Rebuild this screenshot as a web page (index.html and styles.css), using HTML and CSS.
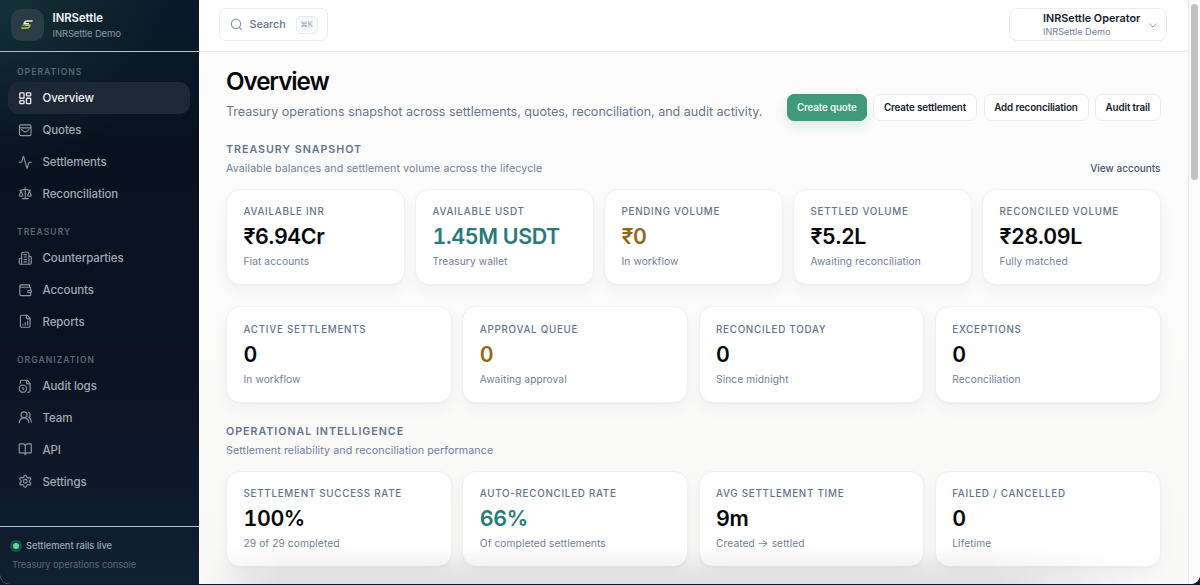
FILE: index.html
```html
<!DOCTYPE html>
<html lang="en">
<head>
<meta charset="utf-8">
<title>Overview – INRSettle</title>
<link rel="stylesheet" href="styles.css">
</head>
<body>
<div class="window">
  <aside class="sidebar">
    <div class="brand">
      <div class="brand-mark">
        <svg width="14" height="12" viewBox="0 0 14 12" fill="none" stroke-width="1.6"><path d="M12.6 2H7.2Q5.2 2 4.6 3.4L4.2 4.7H9" stroke="#e9ecea"/><path d="M5 6.2H9.8L9.3 7.7Q8.8 9 7.2 9H1.2" stroke="#b9c94e"/><path d="M1.8 6.4H5.5" stroke="#8fa34a" stroke-width="1"/></svg>
      </div>
      <div class="brand-text"><div class="brand-name">INRSettle</div><div class="brand-org">INRSettle Demo</div></div>
    </div>
    <nav class="nav">
      <div class="nav-title">OPERATIONS</div>
      <a class="nav-item active"><svg class="icon" viewBox="0 0 24 24"><rect x="3" y="3" width="7" height="9" rx="1"/><rect x="14" y="3" width="7" height="5" rx="1"/><rect x="14" y="12" width="7" height="9" rx="1"/><rect x="3" y="16" width="7" height="5" rx="1"/></svg><span>Overview</span></a>
      <a class="nav-item"><svg class="icon" viewBox="0 0 24 24"><rect x="2.5" y="3" width="19" height="18" rx="2.5"/><path d="M3 8h18M6 11l4.4 3.3a3 3 0 0 0 3.2 0L18 11"/></svg><span>Quotes</span></a>
      <a class="nav-item"><svg class="icon" viewBox="0 0 24 24"><path d="M22 12h-2.48a2 2 0 0 0-1.93 1.46l-2.35 8.36a.25.25 0 0 1-.48 0L9.24 2.18a.25.25 0 0 0-.48 0l-2.35 8.36A2 2 0 0 1 4.49 12H2"/></svg><span>Settlements</span></a>
      <a class="nav-item"><svg class="icon" viewBox="0 0 24 24"><path d="m16 16 3-8 3 8c-.87.65-1.92 1-3 1s-2.13-.35-3-1ZM2 16l3-8 3 8c-.87.65-1.92 1-3 1s-2.13-.35-3-1ZM7 21h10M12 3v18M3 7h2c2 0 5-1 7-2 2 1 5 2 7 2h2"/></svg><span>Reconciliation</span></a>
      <div class="nav-title">TREASURY</div>
      <a class="nav-item"><svg class="icon" viewBox="0 0 24 24"><path d="M6 22V4a2 2 0 0 1 2-2h8a2 2 0 0 1 2 2v18ZM6 12H4a2 2 0 0 0-2 2v6a2 2 0 0 0 2 2h2M18 9h2a2 2 0 0 1 2 2v9a2 2 0 0 1-2 2h-2M10 6h4M10 10h4M10 14h4M10 18h4"/></svg><span>Counterparties</span></a>
      <a class="nav-item"><svg class="icon" viewBox="0 0 24 24"><path d="M19 7V4a1 1 0 0 0-1-1H5a2 2 0 0 0 0 4h15a1 1 0 0 1 1 1v4h-3a2 2 0 0 0 0 4h3a1 1 0 0 0 1-1v-2a1 1 0 0 0-1-1M3 5v14a2 2 0 0 0 2 2h15a1 1 0 0 0 1-1v-4"/></svg><span>Accounts</span></a>
      <a class="nav-item"><svg class="icon" viewBox="0 0 24 24"><path d="M15 2H6a2 2 0 0 0-2 2v16a2 2 0 0 0 2 2h12a2 2 0 0 0 2-2V7ZM14 2v4a2 2 0 0 0 2 2h4M8 18v-1M12 18v-4M16 18v-6"/></svg><span>Reports</span></a>
      <div class="nav-title">ORGANIZATION</div>
      <a class="nav-item"><svg class="icon" viewBox="0 0 24 24"><path d="M16 22h2a2 2 0 0 0 2-2V7l-5-5H6a2 2 0 0 0-2 2v3M14 2v4a2 2 0 0 0 2 2h4"/><circle cx="8" cy="16" r="6"/><path d="M9.5 17.5 8 16.25V14"/></svg><span>Audit logs</span></a>
      <a class="nav-item"><svg class="icon" viewBox="0 0 24 24"><path d="M18 21a8 8 0 0 0-16 0"/><circle cx="10" cy="8" r="5"/><path d="M22 20c0-3.37-2-6.5-4-8a5 5 0 0 0-.45-8.3"/></svg><span>Team</span></a>
      <a class="nav-item"><svg class="icon" viewBox="0 0 24 24"><path d="M12 7v14M3 18a1 1 0 0 1-1-1V4a1 1 0 0 1 1-1h5a4 4 0 0 1 4 4 4 4 0 0 1 4-4h5a1 1 0 0 1 1 1v13a1 1 0 0 1-1 1h-6a3 3 0 0 0-3 3 3 3 0 0 0-3-3z"/></svg><span>API</span></a>
      <a class="nav-item"><svg class="icon" viewBox="0 0 24 24"><path d="M12.22 2h-.44a2 2 0 0 0-2 2v.18a2 2 0 0 1-1 1.73l-.43.25a2 2 0 0 1-2 0l-.15-.08a2 2 0 0 0-2.73.73l-.22.38a2 2 0 0 0 .73 2.73l.15.1a2 2 0 0 1 1 1.72v.51a2 2 0 0 1-1 1.74l-.15.09a2 2 0 0 0-.73 2.73l.22.38a2 2 0 0 0 2.73.73l.15-.08a2 2 0 0 1 2 0l.43.25a2 2 0 0 1 1 1.73V20a2 2 0 0 0 2 2h.44a2 2 0 0 0 2-2v-.18a2 2 0 0 1 1-1.73l.43-.25a2 2 0 0 1 2 0l.15.08a2 2 0 0 0 2.73-.73l.22-.39a2 2 0 0 0-.73-2.73l-.15-.08a2 2 0 0 1-1-1.74v-.5a2 2 0 0 1 1-1.74l.15-.09a2 2 0 0 0 .73-2.73l-.22-.38a2 2 0 0 0-2.73-.73l-.15.08a2 2 0 0 1-2 0l-.43-.25a2 2 0 0 1-1-1.73V4a2 2 0 0 0-2-2z"/><circle cx="12" cy="12" r="3"/></svg><span>Settings</span></a>
    </nav>
    <div class="status">
      <div class="status-line"><i class="dot"></i><span>Settlement rails live</span></div>
      <div class="status-sub">Treasury operations console</div>
    </div>
  </aside>

  <div class="main">
    <header class="topbar">
      <div class="search"><svg class="icon search-icon" viewBox="0 0 24 24"><circle cx="11" cy="11" r="8.5"/><path d="m21.5 21.5-4.3-4.3"/></svg><span class="search-label">Search</span><kbd class="kbd">⌘K</kbd></div>
      <div class="account"><div><div class="account-name">INRSettle Operator</div><div class="account-org">INRSettle Demo</div></div><svg class="icon chevron" viewBox="0 0 24 24"><path d="m4 9 8 8 8-8"/></svg></div>
    </header>
    <main class="content">
      <div class="page-head">
        <div><h1 class="title">Overview</h1><p class="subtitle">Treasury operations snapshot across settlements, quotes, reconciliation, and audit activity.</p></div>
        <div class="actions"><button class="btn primary">Create quote</button><button class="btn b-settle">Create settlement</button><button class="btn b-recon">Add reconciliation</button><button class="btn b-audit">Audit trail</button></div>
      </div>
      <section class="section">
        <div class="section-head"><div><h2 class="section-title">TREASURY SNAPSHOT</h2><p class="section-sub">Available balances and settlement volume across the lifecycle</p></div><a class="link">View accounts</a></div>
        <div class="cards five">
          <div class="card"><div class="label">AVAILABLE INR</div><div class="value">₹6.94Cr</div><div class="note">Fiat accounts</div></div>
          <div class="card"><div class="label">AVAILABLE USDT</div><div class="value teal">1.45M USDT</div><div class="note">Treasury wallet</div></div>
          <div class="card"><div class="label">PENDING VOLUME</div><div class="value amber">₹0</div><div class="note">In workflow</div></div>
          <div class="card"><div class="label">SETTLED VOLUME</div><div class="value">₹5.2L</div><div class="note">Awaiting reconciliation</div></div>
          <div class="card"><div class="label">RECONCILED VOLUME</div><div class="value">₹28.09L</div><div class="note">Fully matched</div></div>
        </div>
      </section>
      <div class="cards four">
        <div class="card"><div class="label">ACTIVE SETTLEMENTS</div><div class="value">0</div><div class="note">In workflow</div></div>
        <div class="card"><div class="label">APPROVAL QUEUE</div><div class="value amber">0</div><div class="note">Awaiting approval</div></div>
        <div class="card"><div class="label">RECONCILED TODAY</div><div class="value">0</div><div class="note">Since midnight</div></div>
        <div class="card"><div class="label">EXCEPTIONS</div><div class="value">0</div><div class="note">Reconciliation</div></div>
      </div>
      <section class="section intelligence">
        <div class="section-head"><div><h2 class="section-title">OPERATIONAL INTELLIGENCE</h2><p class="section-sub">Settlement reliability and reconciliation performance</p></div></div>
        <div class="cards four">
          <div class="card"><div class="label">SETTLEMENT SUCCESS RATE</div><div class="value">100%</div><div class="note">29 of 29 completed</div></div>
          <div class="card"><div class="label">AUTO-RECONCILED RATE</div><div class="value teal">66%</div><div class="note">Of completed settlements</div></div>
          <div class="card"><div class="label">AVG SETTLEMENT TIME</div><div class="value">9m</div><div class="note">Created <span class="arrow">→</span> settled</div></div>
          <div class="card"><div class="label">FAILED / CANCELLED</div><div class="value">0</div><div class="note">Lifetime</div></div>
        </div>
      </section>
    </main>
    <div class="fade"></div>
  </div>
  <div class="scroll-track"><div class="scroll-thumb"></div></div>
</div>
</body>
</html>
```
FILE: styles.css
```css
* { box-sizing: border-box; }
body { margin: 0; background: #11142b; font-family: Inter, "Liberation Sans", sans-serif; overflow: hidden; }
h1, h2, p { margin: 0; }
.window { display: flex; width: 1200px; height: 584px; border-radius: 0 0 9px 9px; overflow: hidden; background: #fcfcfc; }
.icon { fill: none; stroke: currentColor; stroke-width: 1.9; stroke-linecap: round; stroke-linejoin: round; flex: none; }

.sidebar { width: 199px; flex: none; display: flex; flex-direction: column; background: radial-gradient(circle at 0 0, rgba(30, 82, 72, .42), transparent 170px), linear-gradient(180deg, #0b1a29 0, #08121f 140px, #0a1221 350px, #0d1828 470px, #102133 584px); }
.brand { height: 52px; flex: none; display: flex; align-items: flex-start; gap: 9px; padding: 8.5px 11px 0; border-bottom: 1.5px solid #b4c0c4; }
.brand-mark { width: 32.5px; height: 32.5px; border-radius: 10px; background: #2a3d45; display: flex; align-items: center; justify-content: center; }
.brand-text { padding-top: 2px; }
.brand-name { font-size: 11.3px; line-height: 15px; font-weight: 600; color: #f3f6f8; }
.brand-org { font-size: 9.6px; line-height: 15px; letter-spacing: -.2px; color: #8996a1; }
.nav { flex: 1; padding: 13px 8px 0; }
.nav-title { height: 14px; padding-left: 9px; margin-bottom: 3px; font-size: 8.5px; line-height: 14px; letter-spacing: 1.08px; font-weight: 600; color: #5d6873; }
.nav-item + .nav-title { margin-top: 15.2px; }
.nav-item { height: 31.93px; display: flex; align-items: center; gap: 10.5px; padding-left: 9.5px; margin-right: 1px; border-radius: 10px; font-size: 11.5px; font-weight: 500; letter-spacing: -.1px; color: #a1aab4; }
.nav-item .icon { width: 14.5px; height: 14.5px; color: #8b96a2; }
.nav-item.active { background: #1c2835; color: #eef1f4; }
.nav-item.active .icon { color: #e6eaee; stroke-width: 2.2; }
.status { height: 58px; flex: none; border-top: 1.5px solid #b4c0c4; padding: 11px 12px; }
.status-line { display: flex; align-items: center; gap: 7px; padding-left: 1px; font-size: 9.3px; line-height: 16px; font-weight: 500; letter-spacing: -.03px; color: #9ca7b1; }
.dot { width: 6px; height: 6px; border-radius: 50%; background: #70c9a8; box-shadow: 0 0 0 3px #14573f; }
.status-sub { margin-top: 3px; font-size: 9.3px; line-height: 16px; letter-spacing: -.04px; color: #5c6976; }

.main { position: relative; flex: 1; min-width: 0; display: flex; flex-direction: column; background: linear-gradient(#fdfdfd, #f9f9f8); }
.topbar { height: 52px; flex: none; display: flex; justify-content: space-between; align-items: flex-start; padding: 8px 21px 0 20px; background: #fefefe; border-bottom: 1px solid #e5e9ec; }
.search { display: flex; align-items: center; width: 109px; height: 33px; padding-left: 10px; border: 1px solid #e9ebee; border-radius: 7px; background: #fff; color: #64748b; }
.search-icon { width: 13px; height: 13px; margin-right: 6.5px; color: #8490a1; }
.search-label { width: 46px; font-size: 10.8px; font-weight: 500; }
.kbd { width: 22px; height: 18px; border: 1px solid #e6e9f0; border-radius: 5px; background: #f9fafc; font: 500 7.5px/16px Inter, "DejaVu Sans", sans-serif; text-align: center; color: #a4adbb; }
.account { display: flex; justify-content: space-between; width: 158.5px; height: 33px; padding: 3px 8px 0 33.5px; border: 1px solid #e9ebee; border-radius: 8px; background: #fff; }
.account-name { font-size: 10.8px; line-height: 14px; font-weight: 600; color: #141c2c; white-space: nowrap; }
.account-org { font-size: 9.1px; line-height: 11px; color: #718096; }
.chevron { width: 10px; height: 10px; margin-top: 8px; color: #8a94a2; stroke-width: 2.2; }

.content { padding: 14px 27.5px 0 27px; }
.page-head { display: flex; justify-content: space-between; height: 76px; }
.title { padding-top: 1px; font-size: 24.2px; line-height: 30px; font-weight: 600; letter-spacing: -1.1px; color: #05070c; font-optical-sizing: none; }
.subtitle { margin-top: 4.5px; font-size: 12.52px; line-height: 20px; color: #68778a; white-space: nowrap; }
.actions { display: flex; gap: 6.5px; padding-top: 28px; }
.btn { height: 27px; padding: 0; border: 1px solid #e8eaec; border-radius: 7px; background: #fff; font: 600 9.8px Inter, sans-serif; letter-spacing: -.13px; color: #151c2b; white-space: nowrap; }
.primary { width: 79.5px; background: #40997a; border-color: #40997a; color: #e6f7ef; box-shadow: 0 5px 12px rgba(64, 153, 122, .2); }
.b-settle { width: 104px; }
.b-recon { width: 105px; }
.b-audit { width: 65.5px; }

.section-head { display: flex; justify-content: space-between; height: 46.5px; }
.section-title { font-size: 10.7px; line-height: 15px; font-weight: 600; letter-spacing: .97px; color: #64748b; }
.section-sub { margin-top: 4px; font-size: 10.7px; line-height: 16px; letter-spacing: .08px; color: #718096; }
.link { margin-top: 18.5px; font-size: 10px; line-height: 14px; font-weight: 500; color: #475569; }
.cards { display: grid; gap: 10.5px; }
.five { grid-template-columns: repeat(5, 1fr); margin-bottom: 21px; }
.four { grid-template-columns: repeat(4, 1fr); }
.card { height: 96.5px; padding: 14.5px 16.5px; border: 1px solid #f0f0f1; border-radius: 14px; background: #fff; box-shadow: 0 1px 2px rgba(15, 23, 42, .03), 0 7px 16px rgba(15, 23, 42, .04); white-space: nowrap; }
.label { font-size: 9.8px; line-height: 15px; font-weight: 500; letter-spacing: .73px; color: #64748b; }
.value { margin-top: 3px; font-size: 21.4px; line-height: 28px; font-weight: 600; letter-spacing: -.4px; font-variant-numeric: tabular-nums; color: #05070c; }
.teal { color: #277a78; }
.amber { color: #936719; }
.note { margin-top: 4px; font-size: 10.2px; line-height: 14px; letter-spacing: .09px; color: #718096; }
.arrow { display: inline-block; margin-right: 1px; transform: scaleX(1.2); }
.intelligence { margin-top: 21.5px; }
.fade { position: absolute; inset: auto 0 0; height: 36px; background: linear-gradient(rgba(70, 75, 80, 0), rgba(70, 75, 80, .15)); mask-image: linear-gradient(90deg, transparent, #000 8%, #000 80%, transparent 96%); }
.scroll-track { width: 12px; flex: none; padding: 4px 0 0 2px; border-left: 1px solid #eaebed; background: #fbfbfc; }
.scroll-thumb { width: 6.5px; height: 176px; border-radius: 4px; background: #c1c1c1; }
```
